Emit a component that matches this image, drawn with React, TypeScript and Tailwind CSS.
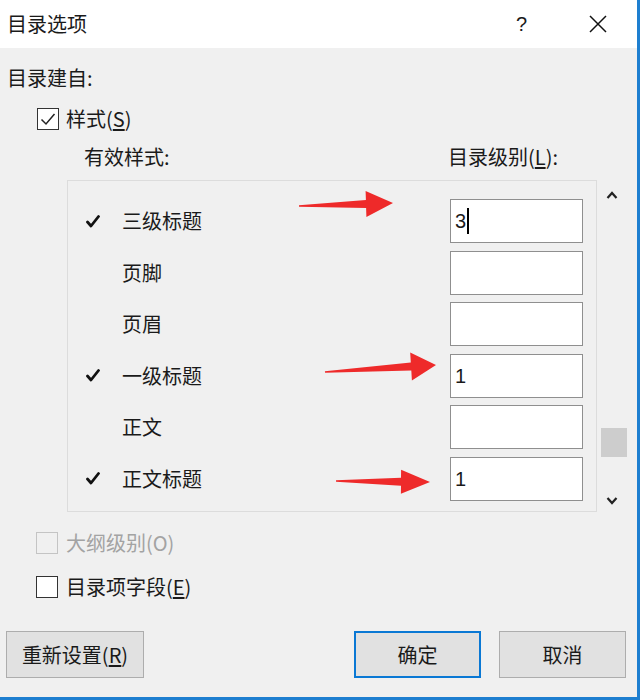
import React from 'react';

type Pt = [number, number];

// red annotation arrow: thin tail widening to a triangular head
function arrowPoints(tail: Pt, tip: Pt, headLen: number, headHalf: number, shaftHalf: number) {
  const dx = tip[0] - tail[0];
  const dy = tip[1] - tail[1];
  const len = Math.hypot(dx, dy);
  const ux = dx / len;
  const uy = dy / len;
  const nx = -uy;
  const ny = ux;
  const bx = tip[0] - ux * headLen;
  const by = tip[1] - uy * headLen;
  const pts: Pt[] = [
    [tail[0] + nx * 0.8, tail[1] + ny * 0.8],
    [bx + nx * shaftHalf, by + ny * shaftHalf],
    [bx + nx * headHalf, by + ny * headHalf],
    tip,
    [bx - nx * headHalf, by - ny * headHalf],
    [bx - nx * shaftHalf, by - ny * shaftHalf],
    [tail[0] - nx * 0.8, tail[1] - ny * 0.8],
  ];
  return pts.map((p) => `${p[0].toFixed(1)},${p[1].toFixed(1)}`).join(' ');
}

const rows = [
  { name: '三级标题', checked: true, level: '3', cursor: true },
  { name: '页脚', checked: false, level: '' },
  { name: '页眉', checked: false, level: '' },
  { name: '一级标题', checked: true, level: '1' },
  { name: '正文', checked: false, level: '' },
  { name: '正文标题', checked: true, level: '1' },
];

function Tick() {
  return (
    <svg width="14" height="13" viewBox="0 0 14 13">
      <path d="M1.5 7 L5 11 L12.5 1.5" fill="none" stroke="#111" strokeWidth="2.8" strokeLinecap="round" strokeLinejoin="round" />
    </svg>
  );
}

function Checkbox({ checked, disabled }: { checked?: boolean; disabled?: boolean }) {
  return (
    <div
      className={`w-[22px] h-[22px] border flex items-center justify-center ${
        disabled ? 'border-[#c4c4c4] bg-[#f0f0f0]' : 'border-[#333] bg-white'
      }`}
    >
      {checked && (
        <svg width="16" height="14" viewBox="0 0 16 14">
          <path d="M1.5 7.5 L6 12 L14.5 2" fill="none" stroke="#222" strokeWidth="1.5" />
        </svg>
      )}
    </div>
  );
}

export default function App() {
  return (
    <div className="relative w-[640px] h-[700px] bg-[#f0f0f0] text-[#1a1a1a] font-['Noto_Sans_CJK_SC',sans-serif] overflow-hidden">
      {/* title bar */}
      <div className="h-[48px] bg-white flex items-center pl-[7px]">
        <span className="text-[20px] leading-none">目录选项</span>
        <span className="ml-auto mr-[62px] text-[20px] leading-none font-['Liberation_Sans',sans-serif]">?</span>
        <svg width="18" height="18" viewBox="0 0 18 18" className="mr-[33px]">
          <path d="M1 1 L17 17 M17 1 L1 17" stroke="#111" strokeWidth="1.5" />
        </svg>
      </div>

      {/* body */}
      <div className="flex flex-col">
        <div className="mt-[15px] h-[30px] pl-[7px] flex items-center text-[20px]">目录建自:</div>

        <div className="mt-[11px] h-[30px] pl-[37px] flex items-center gap-[7px] text-[20px]">
          <Checkbox checked />
          <span>
            样式(<span className="underline underline-offset-2">S</span>)
          </span>
        </div>

        <div className="mt-[8px] h-[30px] flex items-center text-[20px]">
          <span className="ml-[84px] w-[364px]">有效样式:</span>
          <span>
            目录级别(<span className="underline underline-offset-2">L</span>):
          </span>
        </div>

        <div className="mt-[8px] flex">
          <div className="ml-[67px] w-[530px] h-[332px] border border-[#dcdcdc] pt-[18px] flex flex-col gap-[7.6px]">
            {rows.map((r) => (
              <div key={r.name} className="h-[44px] flex items-center text-[20px]">
                <div className="w-[14px] ml-[18px] flex items-center">{r.checked && <Tick />}</div>
                <span className="ml-[22px]">{r.name}</span>
                <div className="ml-auto mr-[13px] w-[133px] h-[44px] bg-white border border-[#8f8f8f] flex items-center pl-[4px] text-[20px] font-['Liberation_Sans',sans-serif]">
                  {r.level}
                  {r.cursor && <span className="inline-block w-[2px] h-[26px] bg-black ml-[1px]" />}
                </div>
              </div>
            ))}
          </div>
          <div className="w-[30px] h-[332px] flex flex-col items-center">
            <svg width="12" height="8" viewBox="0 0 12 8" className="mt-[11px]">
              <path d="M1.5 7 L6 2 L10.5 7" fill="none" stroke="#222" strokeWidth="2.2" />
            </svg>
            <div className="mt-[229px] ml-[3px] w-[26px] h-[29px] bg-[#cdcdcd]" />
            <svg width="12" height="8" viewBox="0 0 12 8" className="mt-[40px]">
              <path d="M1.5 1 L6 6 L10.5 1" fill="none" stroke="#222" strokeWidth="2.2" />
            </svg>
          </div>
        </div>

        <div className="mt-[20px] h-[22px] pl-[36px] flex items-center gap-[8px] text-[20px] text-[#a3a3a3]">
          <Checkbox disabled />
          <span>大纲级别(O)</span>
        </div>

        <div className="mt-[22px] h-[22px] pl-[36px] flex items-center gap-[8px] text-[20px]">
          <Checkbox />
          <span>
            目录项字段(<span className="underline underline-offset-2">E</span>)
          </span>
        </div>

        <div className="mt-[33px] flex text-[20px]">
          <button className="ml-[6px] w-[138px] h-[47px] bg-[#e1e1e1] border border-[#adadad] flex items-center justify-center">
            重新设置(<span className="underline underline-offset-2">R</span>)
          </button>
          <button className="ml-[210px] w-[127px] h-[47px] bg-[#e1e1e1] border-2 border-[#0a78d4] flex items-center justify-center">
            确定
          </button>
          <button className="ml-[18px] w-[127px] h-[47px] bg-[#e1e1e1] border border-[#adadad] flex items-center justify-center">
            取消
          </button>
        </div>
      </div>

      {/* window edges */}
      <div className="absolute top-0 right-0 w-[3px] h-[700px] bg-[#1e7fd0]" />
      <div className="absolute left-0 bottom-0 w-[640px] h-[3px] bg-[#1e7fd0]" />

      {/* red annotation arrows */}
      <svg className="absolute inset-0 pointer-events-none" width="640" height="700">
        <polygon points={arrowPoints([299, 206], [393, 203], 27, 13, 4)} fill="#ee2a2a" />
        <polygon points={arrowPoints([325, 372], [436, 365], 25, 14, 4)} fill="#ee2a2a" />
        <polygon points={arrowPoints([336, 481], [430, 482], 29, 12, 4)} fill="#ee2a2a" />
      </svg>
    </div>
  );
}
